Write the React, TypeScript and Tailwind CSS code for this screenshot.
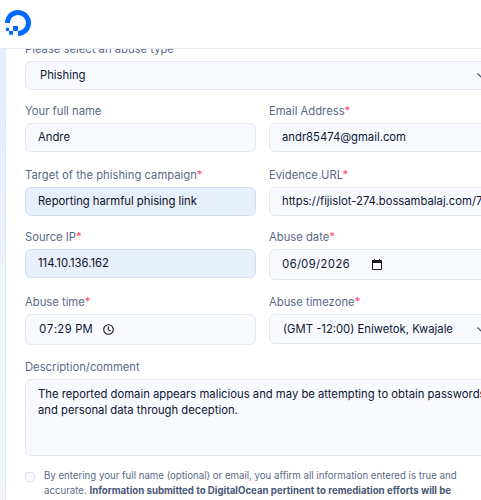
import React from 'react'

interface FieldProps {
    label: string
    required?: boolean
    children: React.ReactNode
}

function Field({ label, required, children }: FieldProps) {
    return (
        <div className="min-w-0">
            <label className="block h-[21px] text-[11.25px] leading-[18px] whitespace-nowrap text-[#5b6987]">
                {label}
                {required && <span className="text-[#ff4d6a]">*</span>}
            </label>
            {children}
        </div>
    )
}

interface BoxProps {
    size?: string
    filled?: boolean
    children: React.ReactNode
}

function Box({ size = 'h-[29px] pl-3', filled, children }: BoxProps) {
    return (
        <div
            className={`flex items-center overflow-hidden rounded-[6px] border text-[11.27px] whitespace-nowrap ${size} ${filled
                    ? 'border-[#d3def0] bg-[#e8f0fe] text-[#0b0f1a]'
                    : 'border-[#e3e8f1] bg-[#f9faff] text-[#0b1533]'
                }`}
        >
            {children}
        </div>
    )
}

function Logo() {
    return (
        <svg className="size-[26px] text-[#0069ff]" viewBox="0 0 24 24" fill="currentColor" aria-label="DigitalOcean">
            <path d="M12.04 0C5.408-.02.005 5.37.005 11.992h4.638c0-4.923 4.882-8.731 10.064-6.855a6.95 6.95 0 014.147 4.148c1.889 5.177-1.924 10.055-6.84 10.064v-4.61H7.391v4.623h4.61V24c7.86 0 13.967-7.588 11.397-15.83-1.115-3.59-3.985-6.446-7.575-7.575A12.8 12.8 0 0012.039 0zM7.39 19.362H3.828v3.564H7.39zm-3.563 0v-2.978H.85v2.978z" />
        </svg>
    )
}

function Chevron() {
    return (
        <svg className="mr-[13px] ml-auto h-[5px] w-[9px] shrink-0" viewBox="0 0 9 5" fill="none" stroke="#4a5878" strokeWidth="1.2">
            <path d="M0.5 0.5L4.5 4.3L8.5 0.5" />
        </svg>
    )
}

function CalendarIcon() {
    return (
        <svg className="h-[11px] w-[10px]" viewBox="0 0 10 11" fill="#161616">
            <path fillRule="evenodd" d="M1 1H2V0H3V1H7V0H8V1H9Q10 1 10 2V10Q10 11 9 11H1Q0 11 0 10V2Q0 1 1 1ZM1 4V10H9V4Z" />
        </svg>
    )
}

function ClockIcon() {
    return (
        <svg className="size-[11px]" viewBox="0 0 11 11" fill="none" stroke="#161616" strokeWidth="1.1">
            <circle cx="5.5" cy="5.5" r="4.8" />
            <path d="M5.3 2.6V5.7L7.6 7.1" />
        </svg>
    )
}

export default function App() {
    return (
        <div className="h-[500px] w-[481px] overflow-hidden bg-linear-to-b from-[#dfeeff] to-[#f4f7ff] font-['Inter',sans-serif]">
            <header className="relative z-10 flex h-[49px] items-start border-b border-[#e7e9ed] bg-white pt-[10px] pl-[5px]">
                <Logo />
            </header>

            {/* The form runs past the right edge of the window */}
            <main className="-mt-[9px] ml-[5px] h-[480px] w-[515px] border-l border-[#e2e7ef] bg-white pl-[19px]">
                <form className="w-[475px]">
                    <div className="h-[62px]">
                        <Field label="Please select an abuse type">
                            <Box size="h-[29px] w-[475px] pl-[14px] pb-px">
                                Phishing
                                <Chevron />
                            </Box>
                        </Field>
                    </div>

                    <div className="grid h-[64px] grid-cols-[231px_231px] gap-x-[13px]">
                        <Field label="Your full name">
                            <Box>Andre</Box>
                        </Field>
                        <Field label="Email Address" required>
                            <Box>andr85474@gmail.com</Box>
                        </Field>
                    </div>

                    <div className="grid h-[62px] grid-cols-[231px_231px] gap-x-[13px]">
                        <Field label="Target of the phishing campaign" required>
                            <Box filled>Reporting harmful phising link</Box>
                        </Field>
                        <Field label="Evidence URL" required>
                            <Box>https://fijislot-274.bossambalaj.com/7</Box>
                        </Field>
                    </div>

                    <div className="grid h-[65px] grid-cols-[231px_231px] gap-x-[13px]">
                        <Field label="Source IP" required>
                            <Box filled>114.10.136.162</Box>
                        </Field>
                        <Field label="Abuse date" required>
                            <Box size="h-[31px] pl-3">
                                <span className="w-[90px] tracking-[0.15px] tabular-nums">06/09/2026</span>
                                <CalendarIcon />
                            </Box>
                        </Field>
                    </div>

                    <div className="grid h-[65px] grid-cols-[231px_231px] gap-x-[13px]">
                        <Field label="Abuse time" required>
                            <Box size="h-[31px] pl-[13px]">
                                <span className="w-[64px] tracking-[0.15px] tabular-nums">07:29 PM</span>
                                <ClockIcon />
                            </Box>
                        </Field>
                        <Field label="Abuse timezone" required>
                            <Box size="h-[30px] pl-[13px]">
                                (GMT -12:00) Eniwetok, Kwajale
                                <Chevron />
                            </Box>
                        </Field>
                    </div>

                    <Field label="Description/comment">
                        <div className="h-[77px] w-[475px] rounded-[6px] border border-[#e3e8f1] bg-[#f9faff] pt-[6px] pl-3 text-[11.27px] leading-[16px] whitespace-nowrap text-[#0b1533]">
                            The reported domain appears malicious and may be attempting to obtain passwords
                            <br />
                            and personal data through deception.
                        </div>
                    </Field>

                    <div className="mt-[12px] flex gap-[9px]">
                        <div className="mt-[4px] size-[10px] shrink-0 rounded-[3px] border border-[#dfe3f0] bg-[#f9faff]" />
                        <p className="text-[9.67px] leading-[15px] whitespace-nowrap text-[#5b6987]">
                            By entering your full name (optional) or email, you affirm all information entered is true and
                            <br />
                            accurate. <b className="font-bold text-[#4a5878]">Information submitted to DigitalOcean pertinent to remediation efforts will be</b>
                        </p>
                    </div>
                </form>
            </main>
        </div>
    )
}
